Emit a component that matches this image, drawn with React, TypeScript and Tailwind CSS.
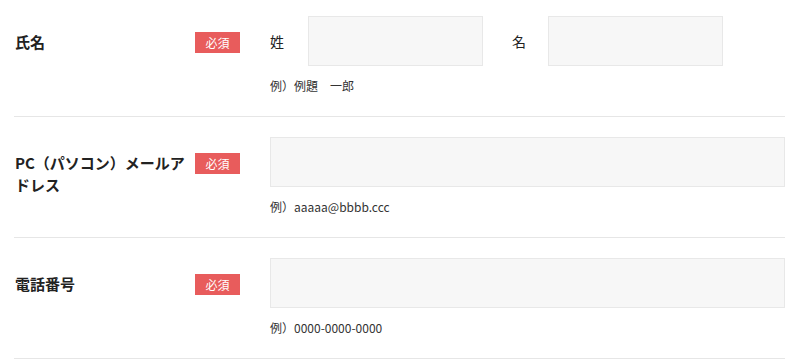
import React from "react";

const font = { fontFamily: '"Noto Sans CJK JP", "Noto Sans", sans-serif' };

function Badge() {
  return (
    <span className="flex h-[21px] w-[45px] shrink-0 items-center justify-center bg-[#e85c5c] text-[12px] leading-none text-white">
      必須
    </span>
  );
}

function Row({
  label,
  children,
  example,
  first,
}: {
  label: React.ReactNode;
  children: React.ReactNode;
  example: string;
  first?: boolean;
}) {
  return (
    <div className={`flex border-b border-[#e6e6e6] ${first ? "pt-4" : "pt-5"} pb-5`}>
      <div className="flex w-[256px] shrink-0 items-start pl-px pr-[30px]">
        <div className="mt-[15px] flex w-full items-start justify-between">
          <div className="w-[172px] text-[15px] font-bold leading-[22px] text-[#222]">{label}</div>
          <div className="mt-px">
            <Badge />
          </div>
        </div>
      </div>
      <div className="flex flex-1 flex-col">
        {children}
        <div className="mt-[10px] text-[12px] leading-[20px] text-[#333]">{example}</div>
      </div>
    </div>
  );
}

export default function App() {
  return (
    <div className="h-[360px] w-[800px] overflow-hidden bg-white" style={font}>
      <div className="ml-[14px] w-[771px]">
        <Row label="氏名" example="例）例題　一郎" first>
          <div className="flex h-[50px] items-center">
            <span className="w-[38px] text-[14px] text-[#222]">姓</span>
            <div className="h-[50px] w-[175px] border border-[#e8e8e8] bg-[#f7f7f7]" />
            <span className="ml-[29px] w-[36px] text-[14px] text-[#222]">名</span>
            <div className="h-[50px] w-[175px] border border-[#e8e8e8] bg-[#f7f7f7]" />
          </div>
        </Row>
        <Row label="PC（パソコン）メールアドレス" example="例）aaaaa@bbbb.ccc">
          <div className="h-[50px] w-full border border-[#e8e8e8] bg-[#f7f7f7]" />
        </Row>
        <Row label="電話番号" example="例）0000-0000-0000">
          <div className="h-[50px] w-full border border-[#e8e8e8] bg-[#f7f7f7]" />
        </Row>
      </div>
    </div>
  );
}
